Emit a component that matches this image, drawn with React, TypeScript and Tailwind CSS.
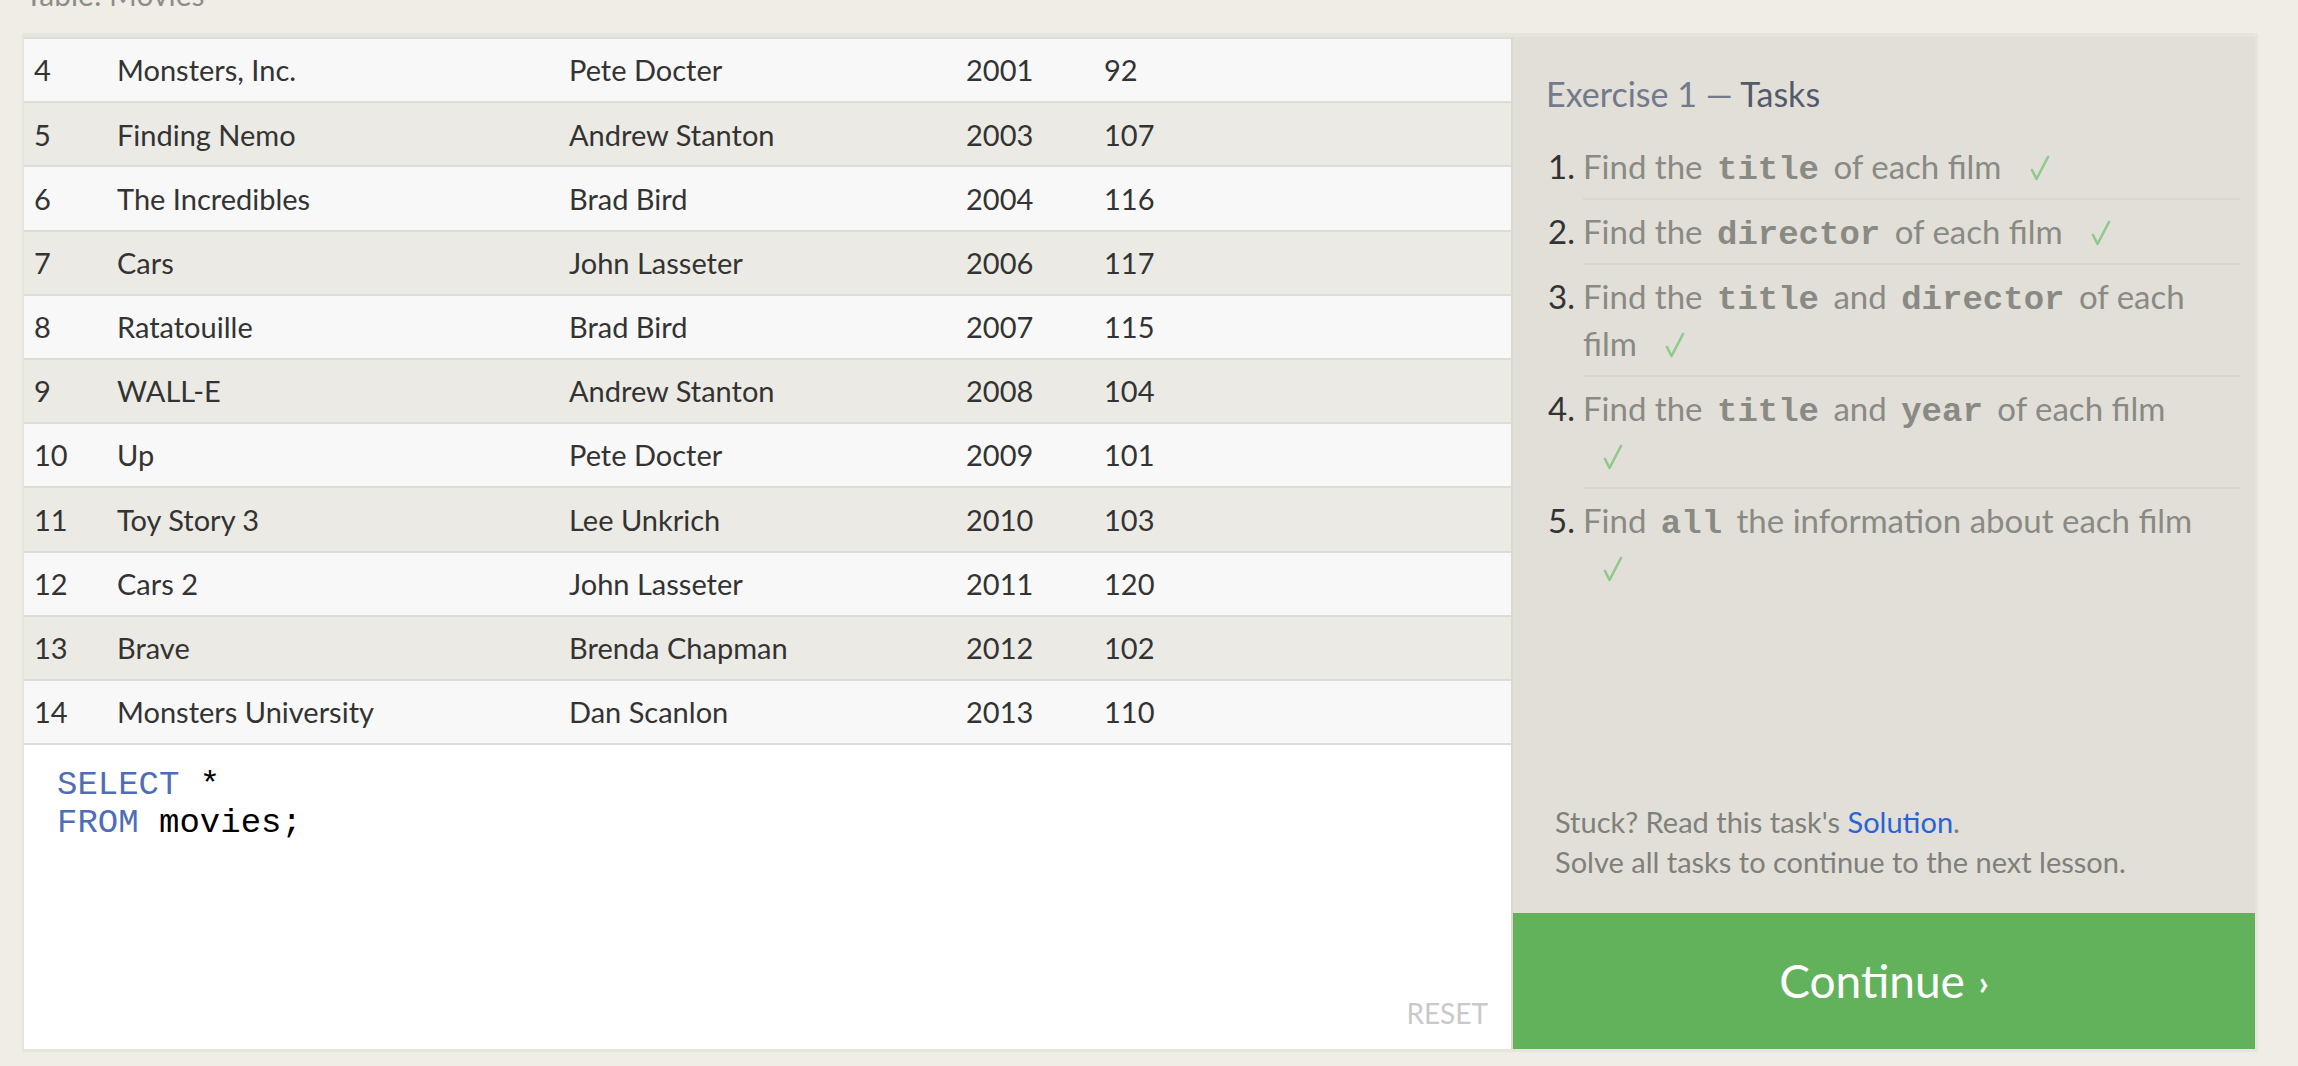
import React from 'react';

const movies = [
  { id: 4, title: 'Monsters, Inc.', director: 'Pete Docter', year: 2001, length: 92 },
  { id: 5, title: 'Finding Nemo', director: 'Andrew Stanton', year: 2003, length: 107 },
  { id: 6, title: 'The Incredibles', director: 'Brad Bird', year: 2004, length: 116 },
  { id: 7, title: 'Cars', director: 'John Lasseter', year: 2006, length: 117 },
  { id: 8, title: 'Ratatouille', director: 'Brad Bird', year: 2007, length: 115 },
  { id: 9, title: 'WALL-E', director: 'Andrew Stanton', year: 2008, length: 104 },
  { id: 10, title: 'Up', director: 'Pete Docter', year: 2009, length: 101 },
  { id: 11, title: 'Toy Story 3', director: 'Lee Unkrich', year: 2010, length: 103 },
  { id: 12, title: 'Cars 2', director: 'John Lasseter', year: 2011, length: 120 },
  { id: 13, title: 'Brave', director: 'Brenda Chapman', year: 2012, length: 102 },
  { id: 14, title: 'Monsters University', director: 'Dan Scanlon', year: 2013, length: 110 },
];

const sans = { fontFamily: 'Lato, "Open Sans", sans-serif' };
const mono = { fontFamily: '"Liberation Mono", "DejaVu Sans Mono", monospace' };

function Code({ children }: { children: React.ReactNode }) {
  return (
    <code className="px-[6px] text-[34px] font-bold leading-none text-[#8a8a84]" style={mono}>
      {children}
    </code>
  );
}

// thin "√" style tick used for finished tasks
function Check() {
  return (
    <svg className="ml-[20px] inline-block align-[-2px]" width="20" height="26" viewBox="0 0 20 26" fill="none">
      <polyline points="2,15 6.5,24 18,2" stroke="#8fca8c" strokeWidth="2.6" strokeLinecap="round" strokeLinejoin="round" />
    </svg>
  );
}

const tasks: React.ReactNode[] = [
  <>Find the <Code>title</Code> of each film <Check /></>,
  <>Find the <Code>director</Code> of each film <Check /></>,
  <>Find the <Code>title</Code> and <Code>director</Code> of each film <Check /></>,
  <>Find the <Code>title</Code> and <Code>year</Code> of each film <Check /></>,
  <>Find <Code>all</Code> the information about each film <Check /></>,
];

export default function App() {
  return (
    <div className="h-[1066px] overflow-hidden bg-[#f0ede6] pl-[22px] pr-[40px]" style={sans}>
      <div className="-mt-[24px] h-[36px] pl-[3px] text-[30px] leading-[36px] text-[#8d8d88]">Table: Movies</div>

      <div className="mt-[21px] flex h-[1019px] border-b-[3px] border-l-2 border-r-[3px] border-t-4 border-[#e5e4dd]">
        {/* Left: table + editor */}
        <div className="flex w-[1487px] flex-col">
          <div className="border-b-2 border-[#dddcd6] text-[29px] text-[#333333]">
            {movies.map((m, i) => (
              <div
                key={m.id}
                className={`flex h-[64.2px] items-center border-t-2 border-[#dddcd6] ${i % 2 === 0 ? 'bg-[#f8f8f8]' : 'bg-[#ebeae4]'}`}
              >
                <div className="w-[83px] pl-[10px]">{m.id}</div>
                <div className="w-[452px] pl-[10px]">{m.title}</div>
                <div className="w-[397px] pl-[10px]">{m.director}</div>
                <div className="w-[138px] pl-[10px]">{m.year}</div>
                <div className="flex-1 pl-[10px]">{m.length}</div>
              </div>
            ))}
          </div>

          <div className="flex flex-1 flex-col justify-between bg-white pb-[20px] pl-[33px] pr-[23px] pt-[21px]">
            <div className="text-[34px] leading-[38px] text-black" style={mono}>
              <div>
                <span className="text-[#4f6db6]">SELECT</span> *
              </div>
              <div>
                <span className="text-[#4f6db6]">FROM</span> movies;
              </div>
            </div>
            <div className="self-end text-[28px] leading-[32px] text-[#c9c9c9]">RESET</div>
          </div>
        </div>

        <div className="w-[2px] bg-[#d9d8d1]" />

        {/* Right: tasks + continue */}
        <div className="flex flex-1 flex-col bg-[#e1dfd8]">
          <div className="flex flex-1 flex-col justify-between">
            <div className="pl-[33px] pr-[15px] pt-[37px]">
              <h2 className="text-[34px] leading-[40px]">
                <span className="text-[#737a8b]">Exercise 1 — </span>
                <span className="text-[#525a6b]">Tasks</span>
              </h2>
              <ol className="mt-[21px] pl-[2px]">
                {tasks.map((t, i) => (
                  <li key={i} className="flex text-[33px] leading-[47px]">
                    <span className="w-[35px] shrink-0 py-[8px] text-[#333333]">{i + 1}.</span>
                    <div
                      className={`flex-1 py-[8px] pr-[30px] text-[#8a8a84] ${i < tasks.length - 1 ? 'border-b-2 border-[#d8d6ce]' : ''}`}
                    >
                      {t}
                    </div>
                  </li>
                ))}
              </ol>
            </div>
            <div className="pb-[31px] pl-[42px] text-[29px] leading-[40px] text-[#80807b]">
              <p>
                Stuck? Read this task's <span className="text-[#2a63d6]">Solution</span>.
              </p>
              <p>Solve all tasks to continue to the next lesson.</p>
            </div>
          </div>
          <div className="flex h-[136px] items-center justify-center bg-[#61b25b] text-white">
            <span className="text-[46px] leading-none">Continue</span>
            <span className="ml-[14px] mt-[2px] text-[34px] font-bold leading-none">›</span>
          </div>
        </div>
      </div>
    </div>
  );
}
